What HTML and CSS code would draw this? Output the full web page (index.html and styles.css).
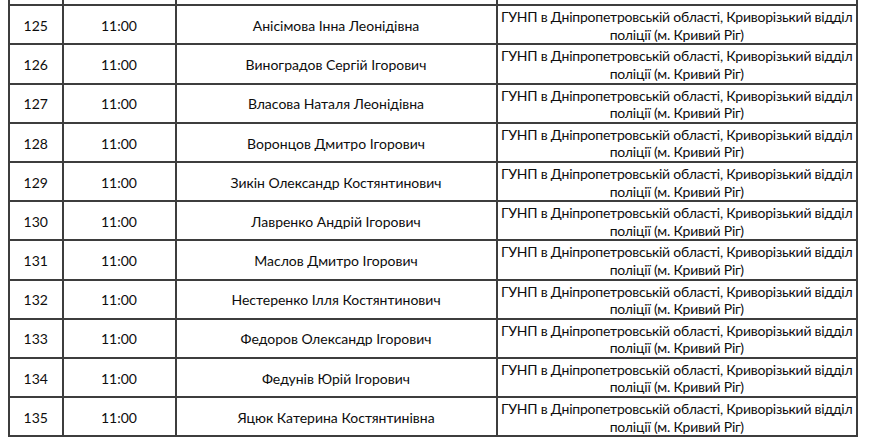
FILE: index.html
```html
<!DOCTYPE html>
<html lang="uk">
<head>
<meta charset="utf-8">
<title>Список</title>
<link rel="stylesheet" href="styles.css">
</head>
<body>
<table class="list">
  <colgroup>
    <col class="c-num"><col class="c-time"><col class="c-name"><col class="c-org">
  </colgroup>
  <tbody>
    <tr class="spacer"><td></td><td></td><td></td><td></td></tr>
    <tr><td>125</td><td>11:00</td><td>Анісімова Інна Леонідівна</td><td class="org">ГУНП в Дніпропетровській області, Криворізький відділ<br>поліції (м. Кривий Ріг)</td></tr>
    <tr><td>126</td><td>11:00</td><td>Виноградов Сергій Ігорович</td><td class="org">ГУНП в Дніпропетровській області, Криворізький відділ<br>поліції (м. Кривий Ріг)</td></tr>
    <tr><td>127</td><td>11:00</td><td>Власова Наталя Леонідівна</td><td class="org">ГУНП в Дніпропетровській області, Криворізький відділ<br>поліції (м. Кривий Ріг)</td></tr>
    <tr><td>128</td><td>11:00</td><td>Воронцов Дмитро Ігорович</td><td class="org">ГУНП в Дніпропетровській області, Криворізький відділ<br>поліції (м. Кривий Ріг)</td></tr>
    <tr><td>129</td><td>11:00</td><td>Зикін Олександр Костянтинович</td><td class="org">ГУНП в Дніпропетровській області, Криворізький відділ<br>поліції (м. Кривий Ріг)</td></tr>
    <tr><td>130</td><td>11:00</td><td>Лавренко Андрій Ігорович</td><td class="org">ГУНП в Дніпропетровській області, Криворізький відділ<br>поліції (м. Кривий Ріг)</td></tr>
    <tr><td>131</td><td>11:00</td><td>Маслов Дмитро Ігорович</td><td class="org">ГУНП в Дніпропетровській області, Криворізький відділ<br>поліції (м. Кривий Ріг)</td></tr>
    <tr><td>132</td><td>11:00</td><td>Нестеренко Ілля Костянтинович</td><td class="org">ГУНП в Дніпропетровській області, Криворізький відділ<br>поліції (м. Кривий Ріг)</td></tr>
    <tr><td>133</td><td>11:00</td><td>Федоров Олександр Ігорович</td><td class="org">ГУНП в Дніпропетровській області, Криворізький відділ<br>поліції (м. Кривий Ріг)</td></tr>
    <tr><td>134</td><td>11:00</td><td>Федунів Юрій Ігорович</td><td class="org">ГУНП в Дніпропетровській області, Криворізький відділ<br>поліції (м. Кривий Ріг)</td></tr>
    <tr><td>135</td><td>11:00</td><td>Яцюк Катерина Костянтинівна</td><td class="org">ГУНП в Дніпропетровській області, Криворізький відділ<br>поліції (м. Кривий Ріг)</td></tr>
  </tbody>
</table>
</body>
</html>
```
FILE: styles.css
```css
html, body {
  margin: 0;
  padding: 0;
  background: #ffffff;
}
body {
  overflow: hidden;
}
.list {
  border-collapse: collapse;
  table-layout: fixed;
  width: 848px;
  margin: -33px 0 0 8px;
  font-family: Lato, "Noto Sans", sans-serif;
  font-size: 14px;
  color: #0d0d0d;
}
.c-num { width: 53.5px; }
.c-time { width: 113px; }
.c-name { width: 321px; }
.c-org { width: 360.5px; }
.list td {
  border: 2px solid #3d3d3d;
  height: 35.2px;
  padding: 2px 0 0;
  text-align: center;
  vertical-align: middle;
  line-height: 17.6px;
  white-space: nowrap;
  overflow: hidden;
}
.list .spacer td {
  border-top: none;
}
.list td.org {
  letter-spacing: -0.22px;
}
```
